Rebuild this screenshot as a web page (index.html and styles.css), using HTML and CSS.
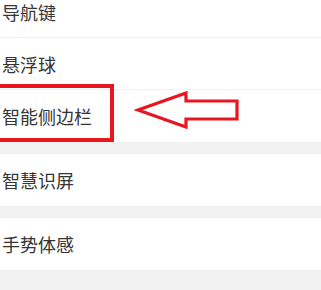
FILE: index.html
```html
<!DOCTYPE html>
<html lang="zh-CN">
<head>
    <meta charset="UTF-8">
    <meta name="viewport" content="width=device-width, initial-scale=1.0">
    <title>设置</title>
    <link rel="stylesheet" href="styles.css">
</head>
<body>
    <div class="page">
        <div class="section first">
            <div class="item line">导航键</div>
            <div class="item line">悬浮球</div>
            <div class="item">智能侧边栏</div>
        </div>
        <div class="section">
            <div class="item">智慧识屏</div>
        </div>
        <div class="section">
            <div class="item">手势体感</div>
        </div>

        <!-- 标注 -->
        <div class="mark-box"></div>
        <svg class="mark-arrow" width="110" height="42" viewBox="0 0 110 42">
            <polygon points="4,20 52,3 52,11 103,11 103,29 52,29 52,37"
                     fill="none" stroke="#e8161f" stroke-width="3.2" stroke-linejoin="miter"/>
        </svg>
    </div>
</body>
</html>
```

FILE: styles.css
```css
body {
    margin: 0;
    background-color: #f2f2f2;
    font-family: "Noto Sans CJK SC", "Noto Sans", sans-serif;
    overflow: hidden;
}
.page {
    position: relative;
    width: 321px;
    height: 290px;
    overflow: hidden;
}
.section {
    background-color: #ffffff;
    margin-bottom: 12px;
}
.section.first {
    margin-top: -14px;
}
.item {
    height: 52px;
    box-sizing: border-box;
    display: flex;
    align-items: center;
    padding-left: 2px;
    font-size: 18px;
    color: #353535;
}
.item.line {
    border-bottom: 1px solid #f0f0f0;
}
.mark-box {
    position: absolute;
    left: -10px;
    top: 84px;
    width: 124px;
    height: 58px;
    box-sizing: border-box;
    border: 4px solid #e8161f;
}
.mark-arrow {
    position: absolute;
    left: 134px;
    top: 90px;
}
```
